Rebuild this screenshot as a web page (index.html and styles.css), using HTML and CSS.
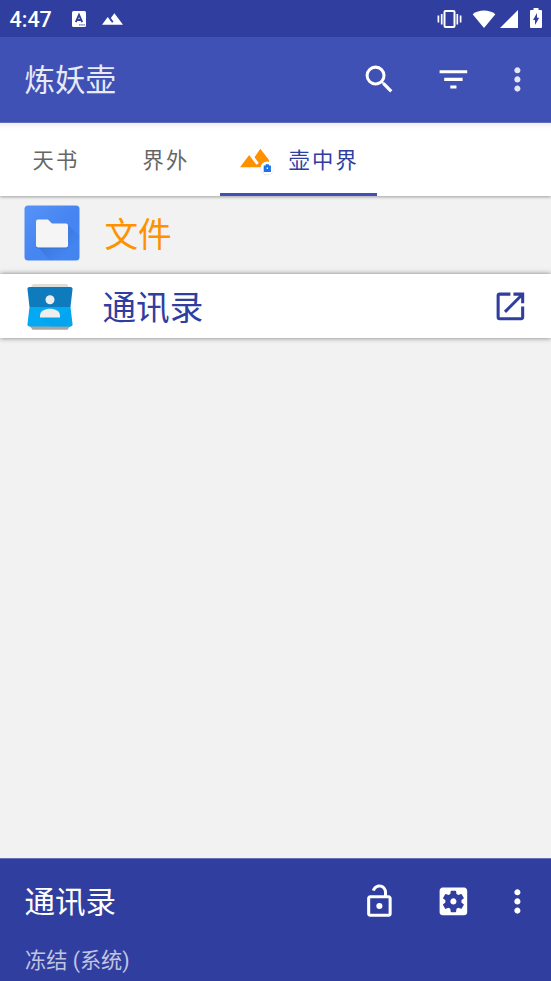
FILE: index.html
```html
<!DOCTYPE html>
<html lang="zh-CN">
<head>
<meta charset="utf-8">
<title>炼妖壶</title>
<link rel="stylesheet" href="styles.css">
</head>
<body>
<div class="screen">
  <header class="status">
    <span class="clock">4:47</span>
    <svg class="st-lang" viewBox="0 0 14 16"><rect width="14" height="16" rx="1.5" fill="#fff"/><path d="M3.8 11.2 7 3.8l3.2 7.4M5 9h4" fill="none" stroke="#303e9f" stroke-width="1.9"/><path d="M7.3 13.2h1.2v1.2H7.3zM9.4 13.2h1.2v1.2H9.4zM11.5 13.2h1.2v1.2h-1.2z" fill="#303e9f"/></svg>
    <svg class="st-mount" viewBox="1 6 22 12"><path d="M14 6l-3.75 5 2.85 3.8-1.6 1.2C9.81 13.75 7 10 7 10l-6 8h22L14 6z" fill="#fff"/></svg>
    <span class="spacer"></span>
    <svg class="st-vib" viewBox="0 0 24 18"><rect x="7" y="1" width="10" height="16" rx="1" fill="none" stroke="#fff" stroke-width="2"/><path d="M.9 5.5v7M4.2 4v10.500M19.800 4v10.500M23.100 5.500v7" stroke="#fff" stroke-width="1.700"/></svg>
    <svg class="st-wifi" viewBox="0 0 24 19"><path d="M0 4.500C6.500-.7 17.500-.7 24 4.500L12 19z" fill="#fff"/></svg>
    <svg class="st-cell" viewBox="0 0 18 18"><path d="M18 0v18H0z" fill="#fff"/></svg>
    <svg class="st-batt" viewBox="0 0 12 20"><path d="M3.500 0h5v2H11a1 1 0 0 1 1 1v16a1 1 0 0 1-1 1H1a1 1 0 0 1-1-1V3a1 1 0 0 1 1-1h2.500z" fill="#fff"/><path d="M7 5v4.700h2.200L5 17v-5H3z" fill="#303e9f"/></svg>
  </header>

  <div class="toolbar">
    <h1 class="title">炼妖壶</h1>
    <svg class="icon icon-first" viewBox="0 0 24 24"><path d="M15.500 14h-.79l-.28-.27A6.471 6.471 0 0 0 16 9.500 6.500 6.500 0 1 0 9.500 16c1.610 0 3.090-.59 4.230-1.570l.27.28v.79l5 4.990L20.490 19l-4.990-5zm-6 0C7.010 14 5 11.990 5 9.500S7.010 5 9.500 5 14 7.010 14 9.500 11.990 14 9.500 14z"/></svg>
    <svg class="icon icon-mid" viewBox="0 0 24 24"><path d="M10 18h4v-2h-4v2zM3 6v2h18V6H3zm3 7h12v-2H6v2z"/></svg>
    <svg class="icon soft" viewBox="0 0 24 24"><path d="M12 8c1.100 0 2-.9 2-2s-.9-2-2-2-2 .9-2 2 .9 2 2 2zm0 2c-1.100 0-2 .9-2 2s.9 2 2 2 2-.9 2-2-.9-2-2-2zm0 6c-1.100 0-2 .9-2 2s.9 2 2 2 2-.9 2-2-.9-2-2-2z"/></svg>
  </div>

  <nav class="tabs">
    <div class="tab">天书</div>
    <div class="tab">界外</div>
    <div class="tab active">
      <svg class="tab-icon" viewBox="0 0 34 30"><path d="M0 21.300 9.200 9l4.400 5.900 2.900 3.900 2.300-1.800-4.300-5.800 5.800-8.400L29 14v7.300z" fill="#ff9100"/><circle cx="27.200" cy="22.500" r="6.800" fill="#ddd"/><circle cx="27.200" cy="22" r="6.600" fill="#fff"/><path d="M23.700 19.500h2v-1.300h3.200v1.300h2V26h-7.200z" fill="#1a73e8"/><path d="M26.700 21.500h1.300v1.500h-1.300z" fill="#fff"/></svg>
      <span>壶中界</span>
    </div>
  </nav>

  <main class="list">
    <div class="row files">
      <svg class="app-files" viewBox="0 0 56 56">
        <defs>
          <linearGradient id="fold" x1="0" y1="0" x2="1" y2="1"><stop offset="0" stop-color="#5793f7"/><stop offset=".5" stop-color="#4686f2"/><stop offset="1" stop-color="#4384ef"/></linearGradient>
          <linearGradient id="shade" x1="0" y1="0" x2="1" y2="1"><stop offset=".3" stop-color="#275bb5" stop-opacity=".4"/><stop offset=".75" stop-color="#275bb5" stop-opacity="0"/></linearGradient>
        </defs>
        <rect x=".5" y=".5" width="55" height="55" rx="3.500" fill="url(#fold)"/>
        <path d="M43 19 55.500 31v21a3.500 3.500 0 0 1-3.500 3.500H26L13 41z" fill="url(#shade)"/>
        <path d="M12 16.500a2 2 0 0 1 2-2h10l4 4h14a2 2 0 0 1 2 2v20a2 2 0 0 1-2 2H14a2 2 0 0 1-2-2z" fill="#3166b8" transform="translate(0 .7)"/>
        <path d="M12 16.500a2 2 0 0 1 2-2h10l4 4h14a2 2 0 0 1 2 2v20a2 2 0 0 1-2 2H14a2 2 0 0 1-2-2z" fill="#f5f5f5"/>
      </svg>
      <span class="name">文件</span>
    </div>
    <div class="row contacts">
      <svg class="app-contacts" viewBox="0 0 46 46">
        <path d="M6 0h34l3 5H3z" fill="#dedfdb"/>
        <path d="M2 41h42l-3.500 4.700h-35z" fill="#aaa49f"/>
        <path d="M2.500 3h41a2 2 0 0 1 2 2.500L43.500 23h-41L.5 5.500a2 2 0 0 1 2-2.500z" fill="#0e7bbd"/>
        <path d="M2.500 23h41l2 17a2 2 0 0 1-2 2.500h-41a2 2 0 0 1-2-2.500z" fill="#04a9f4"/>
        <path d="M13 33.500 23 42.500h20a2 2 0 0 0 2-2.500l-2-15-10 8z" fill="#039fe8" opacity=".5"/>
        <circle cx="23" cy="15.800" r="4.500" fill="#eee"/>
        <path d="M13 33.500v-1.800c0-5 5-7 10-7s10 2 10 7v1.800z" fill="#eee"/>
      </svg>
      <span class="name">通讯录</span>
      <svg class="icon launch" viewBox="0 0 24 24"><path d="M19 19H5V5h7V3H5a2 2 0 0 0-2 2v14a2 2 0 0 0 2 2h14c1.100 0 2-.9 2-2v-7h-2v7zM14 3v2h3.590l-9.830 9.830 1.410 1.410L19 6.410V10h2V3h-7z"/></svg>
    </div>
  </main>

  <footer class="sheet">
    <div class="sheet-bar">
      <h2 class="title bright">通讯录</h2>
      <svg class="icon icon-first" viewBox="0 0 24 24"><path fill-rule="evenodd" d="M18 8h-1V6c0-2.760-2.240-5-5-5-2.280 0-4.270 1.540-4.840 3.750l1.940.5C9.440 3.930 10.630 3 12 3c1.650 0 3 1.350 3 3v2H6c-1.100 0-2 .9-2 2v10c0 1.100.9 2 2 2h12c1.100 0 2-.9 2-2V10c0-1.100-.9-2-2-2zm0 12H6V10h12v10zM12 13a2 2 0 1 0 0 4 2 2 0 0 0 0-4z"/></svg>
      <svg class="icon icon-mid" viewBox="0 0 24 24"><path d="M12 10c-1.100 0-2 .9-2 2s.9 2 2 2 2-.9 2-2-.9-2-2-2zm7-7H5c-1.110 0-2 .9-2 2v14c0 1.100.89 2 2 2h14c1.110 0 2-.9 2-2V5c0-1.100-.89-2-2-2zm-1.750 9c0 .23-.02.46-.05.68l1.480 1.160c.13.11.17.3.08.45l-1.400 2.420c-.09.15-.27.21-.43.15l-1.740-.7c-.36.28-.76.51-1.180.69l-.26 1.850c-.03.17-.18.3-.35.3h-2.800c-.17 0-.32-.13-.35-.29l-.26-1.850c-.43-.18-.82-.41-1.180-.69l-1.740.7c-.16.06-.34 0-.43-.15l-1.400-2.420a.353.353 0 0 1 .08-.45l1.480-1.160c-.03-.23-.05-.46-.05-.69s.02-.46.05-.68l-1.480-1.160a.353.353 0 0 1-.08-.45l1.400-2.420c.09-.15.27-.21.43-.15l1.740.7c.36-.28.76-.51 1.180-.69l.26-1.850c.03-.17.18-.3.35-.3h2.800c.17 0 .32.13.35.29l.26 1.850c.43.18.82.41 1.180.69l1.740-.7c.16-.06.34 0 .43.15l1.400 2.420c.09.15.05.34-.08.45l-1.480 1.160c.03.23.05.46.05.69z"/></svg>
      <svg class="icon" viewBox="0 0 24 24"><path d="M12 8c1.100 0 2-.9 2-2s-.9-2-2-2-2 .9-2 2 .9 2 2 2zm0 2c-1.100 0-2 .9-2 2s.9 2 2 2 2-.9 2-2-.9-2-2-2zm0 6c-1.100 0-2 .9-2 2s.9 2 2 2 2-.9 2-2-.9-2-2-2z"/></svg>
    </div>
    <p class="state">冻结 (系统)</p>
  </footer>
</div>
</body>
</html>
```
FILE: styles.css
```css
* { box-sizing: border-box; margin: 0; padding: 0; }
body {
  font-family: Roboto, "Noto Sans CJK SC", sans-serif;
  background: #f2f2f2;
  overflow: hidden;
}
svg { display: block; flex: none; }
.screen { height: 981px; display: flex; flex-direction: column; }
.spacer { flex: 1; }

.status {
  flex: none; height: 37px; background: #303e9f; color: #fff;
  display: flex; align-items: center; padding: 0 10px 0 9.500px;
}
.clock { width: 62.500px; font-size: 21.500px; font-weight: 500; line-height: 37px; padding-top: 1px; }
.st-lang { width: 14px; height: 16px; }
.st-mount { width: 21px; height: 12px; margin-left: 16px; }
.st-vib { width: 25px; height: 18px; margin-right: 10px; }
.st-wifi { width: 24px; height: 18px; margin-right: 4px; }
.st-cell { width: 18px; height: 18px; margin-right: 12px; }
.st-batt { width: 12px; height: 20px; margin: 0 -1px 2px 0; }

.toolbar {
  flex: none; height: 86px; background: #3f51b5; border-bottom: 1px solid #6875c3;
  display: flex; align-items: center; padding: 0 15.300px 0 24.500px;
}
.title { flex: 1; font-size: 30.500px; font-weight: 400; line-height: 40px; padding-top: 3px; color: #e8eaf6; }
.bright { color: #fff; }
.icon { width: 36.800px; height: 36.800px; fill: #fff; }
.icon-first { margin-right: 36.700px; }
.icon-mid { margin-right: 27.400px; }
.soft { fill: #e4e6f4; }

.tabs {
  flex: none; height: 73px; display: flex; z-index: 1;
  background: linear-gradient(#f0f0f0, #fff 6px);
  box-shadow: 0 1px 3px rgba(0, 0, 0, .35);
}
.tab {
  width: 110px; display: flex; align-items: center; justify-content: center;
  font-size: 21.300px; letter-spacing: 2.200px; color: #666; padding: 0 0 2px 2px;
}
.active { width: 156.500px; color: #303e9f; border-bottom: 3px solid #3f51b5; padding-top: 1px; padding-bottom: 0; }
.tab-icon { width: 34px; height: 30px; margin: 4px 15px 0 0; }

.list { flex: 1; }
.row { display: flex; align-items: center; }
.name { flex: 1; font-size: 33.600px; line-height: 44px; padding-top: 5px; }
.files { height: 78px; padding: 0 24px 4px; color: #ff9100; }
.app-files { width: 56px; height: 56px; margin-right: 24.500px; }
.contacts {
  height: 64px; padding: 1px 22px 0 27px; background: #fff; color: #303e9f;
  box-shadow: 0 0 5px rgba(0, 0, 0, .5);
}
.app-contacts { width: 46px; height: 46px; margin: 1px 29.500px 0 0; }
.launch { fill: #303e9f; }

.sheet { flex: none; height: 123px; background: #303e9f; border-top: 1px solid #6771b9; }
.sheet-bar { height: 85px; display: flex; align-items: center; padding: 0 15.300px 0 24.500px; }
.state { padding-left: 25px; font-size: 21.200px; line-height: 33px; color: #c1c5e2; }
```
